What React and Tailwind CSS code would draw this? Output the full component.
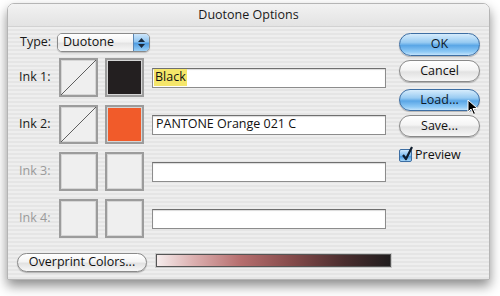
import React from 'react'

const stripes =
  'bg-[repeating-linear-gradient(180deg,#eeeeee_0px,#eeeeee_2px,#e5e5e5_2px,#e5e5e5_4px)]'

function AquaButton({ label, blue, className = '' }) {
  return (
    <div
      className={`flex shrink-0 items-center justify-center rounded-full border text-[12.5px] font-[500] ${
        blue
          ? 'border-[#3d6ea3] bg-[linear-gradient(180deg,#d6ecfc_0%,#98cbf2_40%,#5aa6e6_55%,#8fcaf6_85%,#c2e3fb_100%)] text-[#0d1a2a]'
          : 'border-[#8a8a8a] bg-[linear-gradient(180deg,#ffffff_0%,#f4f4f4_45%,#e2e2e2_55%,#f7f7f7_100%)] text-[#111]'
      } shadow-[0_1px_1px_rgba(0,0,0,0.25)] ${className}`}
    >
      {label}
    </div>
  )
}

function Swatch({ children, fill }) {
  return (
    <div className="relative w-[39px] h-[39px] border-2 border-[#9c9c9c] bg-[#efefef] shadow-[inset_0_0_0_1px_#d6d6d6]">
      {fill && <div className={`absolute inset-[1px] ${fill}`} />}
      {children}
    </div>
  )
}

function Diagonal() {
  return (
    <svg className="absolute inset-0 w-full h-full" viewBox="0 0 35 35" preserveAspectRatio="none">
      <line x1="0" y1="35" x2="35" y2="0" stroke="#3a3a3a" strokeWidth="0.8" />
    </svg>
  )
}

function InkRow({ n, disabled, fill, diag, text, highlight }) {
  return (
    <div className="flex items-center h-[39px]">
      <div className={`w-[40px] text-[12.5px] font-[500] ${disabled ? 'text-[#9a9a9a]' : 'text-[#1a1a1a]'}`}>
        Ink {n}:
      </div>
      <Swatch>{diag && <Diagonal />}</Swatch>
      <div className="ml-[7px]">
        <Swatch fill={fill} />
      </div>
      <div className="ml-[8px] w-[234px] h-[20px] bg-white border border-[#8c8c8c] border-t-[#6f6f6f] shadow-[inset_0_1px_1px_rgba(0,0,0,0.15)] flex items-center pl-[1px] text-[12.5px] font-[500] text-[#111]">
        {text && (
          <span className={highlight ? 'bg-[#f5e66a] px-[1px] h-[17px] flex items-center' : 'pl-[2px]'}>
            {text}
          </span>
        )}
      </div>
    </div>
  )
}

export default function App() {
  return (
    <div
      className="relative w-[500px] h-[296px] overflow-hidden bg-white pl-[7px] pt-[3px]"
      style={{ fontFamily: '"Open Sans", "DejaVu Sans", sans-serif' }}
    >
      <div className="w-[483px] h-[277px] flex flex-col rounded-t-[7px] border border-[#b5b5b5] shadow-[0_6px_12px_rgba(0,0,0,0.45)] overflow-hidden">
        {/* title bar */}
        <div className="h-[23px] flex items-center justify-center border-b border-[#d2d2d2] bg-[linear-gradient(180deg,#f2f2f2_0%,#e3e3e3_100%)] text-[12.5px] font-[500] text-[#1a1a1a]">
          Duotone Options
        </div>

        <div className={`flex-1 flex ${stripes}`}>
          {/* left column */}
          <div className="w-[379px] shrink-0 pl-[11px] pt-[6px]">
            <div className="flex items-center h-[19px]">
              <div className="w-[38px] pl-[1px] text-[12.5px] font-[500] text-[#1a1a1a]">Type:</div>
              <div className="flex w-[93px] h-[19px] rounded-[5px] border border-[#8a8a8a] overflow-hidden shadow-[0_1px_1px_rgba(0,0,0,0.2)]">
                <div className="flex-1 flex items-center pl-[5px] text-[12.5px] font-[500] text-[#111] bg-[linear-gradient(180deg,#ffffff_0%,#f3f3f3_45%,#e4e4e4_55%,#f6f6f6_100%)]">
                  Duotone
                </div>
                <div className="w-[16px] flex flex-col items-center justify-center gap-[2px] border-l border-[#5b86b3] bg-[linear-gradient(180deg,#cde6fb_0%,#8fc5f1_45%,#4f9de2_55%,#9ad0f7_100%)]">
                  <svg width="7" height="4" viewBox="0 0 7 4"><path d="M0 4 L3.5 0 L7 4 Z" fill="#1b2b3d" /></svg>
                  <svg width="7" height="4" viewBox="0 0 7 4"><path d="M0 0 L3.5 4 L7 0 Z" fill="#1b2b3d" /></svg>
                </div>
              </div>
            </div>

            <div className="mt-[6px] flex flex-col gap-[8px]">
              <InkRow n={1} diag fill="bg-[#231f20]" text="Black" highlight />
              <InkRow n={2} diag fill="bg-[#f15b2a]" text="PANTONE Orange 021 C" />
              <InkRow n={3} disabled />
              <InkRow n={4} disabled />
            </div>

            <div className="mt-[15px] flex items-start ml-[-2px]">
              <AquaButton label="Overprint Colors..." className="w-[130px] h-[19px]" />
              <div className="ml-[8px] shrink-0 w-[237px] h-[15px] border border-[#c9c9c9] bg-[linear-gradient(90deg,#f6eeee_0%,#dcb0b0_16%,#b66e6e_36%,#844a4a_58%,#4a2d2e_80%,#1f1c1d_100%)] shadow-[inset_0_0_0_1px_#555]" />
            </div>
          </div>

          {/* right column */}
          <div className="pl-[12px] pt-[6px] flex flex-col">
            <AquaButton label="OK" blue className="w-[81px] h-[23px]" />
            <AquaButton label="Cancel" className="mt-[4px] w-[81px] h-[22px]" />
            <AquaButton label="Load..." blue className="mt-[7px] w-[81px] h-[22px]" />
            <AquaButton label="Save..." className="mt-[4px] w-[81px] h-[22px]" />
            <div className="mt-[9px] flex items-center gap-[3px]">
              <div className="relative w-[13px] h-[13px] rounded-[2px] border border-[#3d6ea3] bg-[linear-gradient(180deg,#cfe7fb_0%,#7fbcef_50%,#4d9be0_60%,#a6d6f8_100%)]">
                <svg className="absolute left-[1px] top-[-4px]" width="13" height="15" viewBox="0 0 13 15">
                  <path d="M2 9 L5 13 L11 1" fill="none" stroke="#0f1c2c" strokeWidth="2.2" strokeLinejoin="round" />
                </svg>
              </div>
              <span className="text-[12.5px] font-[500] text-[#111]">Preview</span>
            </div>
          </div>
        </div>
      </div>

      {/* mouse pointer */}
      <svg className="absolute left-[467px] top-[99px]" width="12" height="17" viewBox="0 0 12 17">
        <path d="M1 1 L1 13 L4 10 L6.5 15.5 L8.5 14.5 L6 9.5 L10.5 9.5 Z" fill="#000" stroke="#fff" strokeWidth="1" strokeLinejoin="round" />
      </svg>
    </div>
  )
}
